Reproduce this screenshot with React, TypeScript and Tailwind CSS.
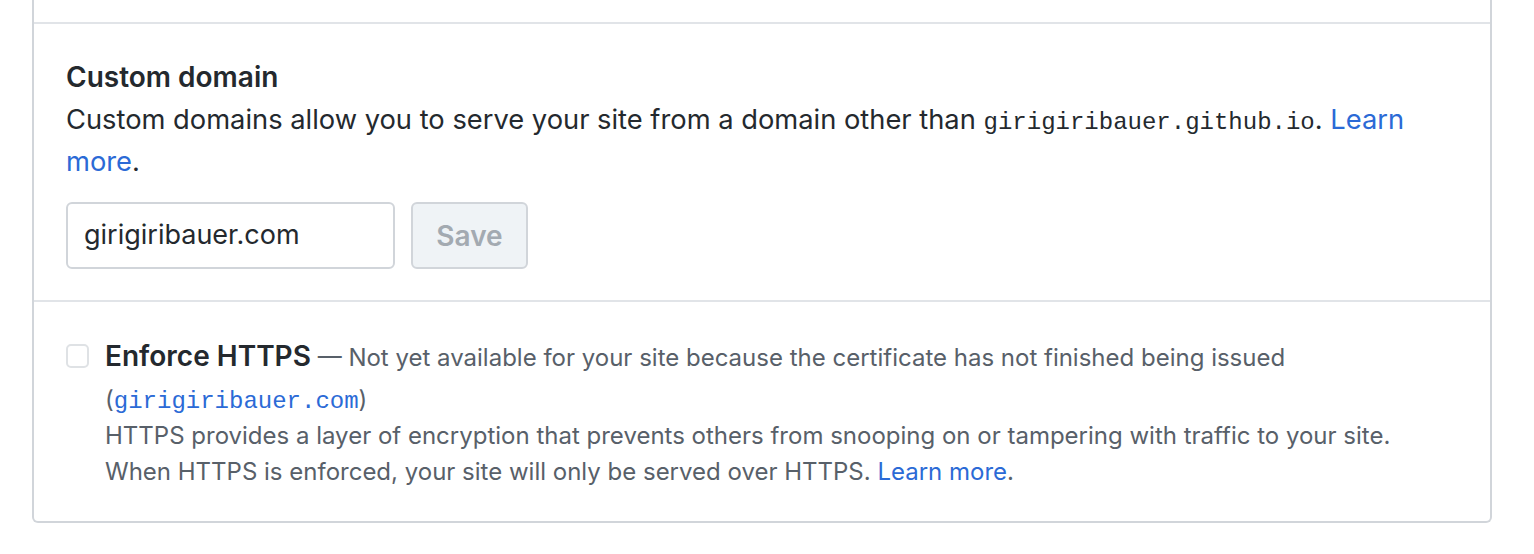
import React from "react";

export default function App() {
  return (
    <div className="w-[1534px] h-[554px] bg-white overflow-hidden font-['Inter','Liberation_Sans',sans-serif]">
      <div className="ml-[32px] w-[1460px] border-x-2 border-b-2 border-[#d1d5da] rounded-b-[6px]">
        <div className="h-[22px]" />
        <div className="border-t-2 border-[#e1e4e8] px-[32px] pt-[32px] pb-[31px]">
          <h3 className="text-[28px] leading-[43px] font-semibold text-[#24292e]">Custom domain</h3>
          <p className="text-[27.3px] leading-[42px] text-[#24292e]">
            Custom domains allow you to serve your site from a domain other than{" "}
            <code className="font-['Liberation_Mono',monospace] text-[24px] leading-none">girigiribauer.github.io</code>.{" "}
            <a className="text-[#2b6ad6]">Learn more</a>.
          </p>
          <div className="flex gap-[16px] mt-[19px]">
            <div className="w-[329px] h-[67px] border-2 border-[#d1d5da] rounded-[6px] flex items-center pl-[16px] text-[27px] text-[#24292e]">
              girigiribauer.com
            </div>
            <div className="w-[117px] h-[67px] border-2 border-[#d1d5da] rounded-[6px] bg-[#eff3f6] flex items-center justify-center text-[28px] font-semibold text-[#a3aab1]">
              Save
            </div>
          </div>
        </div>
        <div className="border-t-2 border-[#e1e4e8] pl-[32px] pr-[32px] pt-[33px] pb-[31px] flex items-start">
          <div className="w-[23px] h-[24px] mt-[9px] border-2 border-[#dfe2e5] rounded-[5px] shrink-0" />
          <div className="ml-[16px]">
            <div className="text-[24px] leading-[42px] text-[#586069]">
              <span className="text-[28px] font-semibold text-[#24292e]">Enforce HTTPS</span>
              {" "}— Not yet available for your site because the certificate has not finished being issued (
              <a className="font-['Liberation_Mono',monospace] leading-none text-[#2b6ad6]">girigiribauer.com</a>)
            </div>
            <p className="-mt-[3px] text-[24px] leading-[36px] text-[#586069]">
              HTTPS provides a layer of encryption that prevents others from snooping on or tampering with traffic to your site.
              <br />
              When HTTPS is enforced, your site will only be served over HTTPS. <a className="text-[#2b6ad6]">Learn more</a>.
            </p>
          </div>
        </div>
      </div>
    </div>
  );
}
